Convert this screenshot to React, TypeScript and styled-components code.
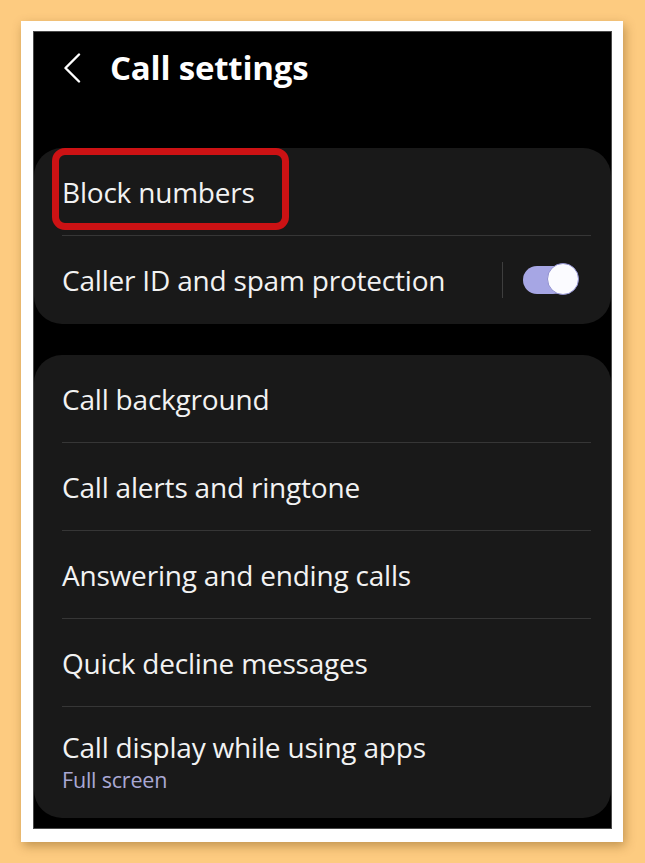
import styled, { createGlobalStyle } from "styled-components";

const GlobalStyle = createGlobalStyle`
  html, body {
    margin: 0;
    padding: 0;
    background: #fdcb80;
  }
  body {
    width: 645px;
    height: 863px;
    overflow: hidden;
    font-family: "Open Sans", "Noto Sans", sans-serif;
  }
`;

const Page = styled.div`
  width: 645px;
  height: 863px;
  padding: 21px 22px 21px 21px;
  box-sizing: border-box;
`;

const Frame = styled.div`
  width: 602px;
  height: 821px;
  background: #ffffff;
  box-sizing: border-box;
  padding: 10px 11px 13px 12px;
  box-shadow: 2px 4px 10px rgba(120, 80, 20, 0.45);
`;

const Screen = styled.div`
  height: 100%;
  background: #000000;
  border: 1px solid #4a4a4a;
  box-sizing: border-box;
  display: flex;
  flex-direction: column;
  overflow: hidden;
`;

const Header = styled.div`
  height: 116px;
  display: flex;
  align-items: flex-start;
  padding: 17px 0 0 26px;
  box-sizing: border-box;
  gap: 26px;
`;

const BackButton = styled.div`
  width: 24px;
  height: 38px;
  display: flex;
  align-items: center;
  justify-content: center;
`;

const Title = styled.h1`
  margin: 0;
  color: #ffffff;
  font-size: 33px;
  font-weight: 700;
  line-height: 38px;
  letter-spacing: -0.2px;
`;

const Card = styled.div<{ $gap?: number }>`
  background: #191919;
  border-radius: 28px;
  margin-top: ${(p) => p.$gap ?? 0}px;
  padding: 0 20px 0 28px;
`;

const Row = styled.div<{ $last?: boolean; $tall?: boolean }>`
  height: ${(p) => (p.$tall ? 111 : 88)}px;
  display: flex;
  align-items: center;
  border-bottom: ${(p) => (p.$last ? "none" : "1.5px solid #363636")};
  box-sizing: border-box;
  position: relative;
`;

const RowText = styled.div`
  flex: 1;
  display: flex;
  flex-direction: column;
`;

const Label = styled.span`
  color: #f2f2f2;
  font-size: 28px;
  line-height: 34px;
  letter-spacing: -0.2px;
`;

const Sub = styled.span`
  color: #a9a8d4;
  font-size: 21.5px;
  line-height: 31px;
  letter-spacing: -0.2px;
`;

const Highlight = styled.div`
  position: absolute;
  left: -10px;
  top: 0;
  width: 237px;
  height: 82px;
  border: 7px solid #cc1214;
  border-radius: 13px;
  box-sizing: border-box;
`;

const Divider = styled.div`
  width: 1px;
  height: 36px;
  background: #3e3e3e;
  margin-right: 20px;
`;

const Toggle = styled.div`
  width: 56px;
  height: 32px;
  position: relative;
  margin-right: 12px;
`;

const Track = styled.div`
  position: absolute;
  left: 0;
  top: 2px;
  width: 44px;
  height: 28px;
  border-radius: 14px;
  background: #a6a6e4;
`;

const Knob = styled.div`
  position: absolute;
  right: 0;
  top: -1px;
  width: 32px;
  height: 32px;
  border-radius: 50%;
  background: #fbfbff;
  border: 1.5px solid #8f8fcf;
  box-sizing: border-box;
`;

const Chevron = () => (
  <svg width="18" height="30" viewBox="0 0 18 30">
    <path d="M16 1.5 L2.5 15 L16 28.5" fill="none" stroke="#ffffff" strokeWidth="2.4" strokeLinecap="round" strokeLinejoin="round" />
  </svg>
);

const items = [
  "Call background",
  "Call alerts and ringtone",
  "Answering and ending calls",
  "Quick decline messages",
];

export default function App() {
  return (
    <>
      <GlobalStyle />
      <Page>
        <Frame>
          <Screen>
            <Header>
              <BackButton>
                <Chevron />
              </BackButton>
              <Title>Call settings</Title>
            </Header>
            <Card>
              <Row>
                <Highlight />
                <RowText>
                  <Label>Block numbers</Label>
                </RowText>
              </Row>
              <Row $last>
                <RowText>
                  <Label>Caller ID and spam protection</Label>
                </RowText>
                <Divider />
                <Toggle>
                  <Track />
                  <Knob />
                </Toggle>
              </Row>
            </Card>
            <Card $gap={31}>
              {items.map((t) => (
                <Row key={t}>
                  <RowText>
                    <Label>{t}</Label>
                  </RowText>
                </Row>
              ))}
              <Row $last $tall>
                <RowText>
                  <Label>Call display while using apps</Label>
                  <Sub>Full screen</Sub>
                </RowText>
              </Row>
            </Card>
          </Screen>
        </Frame>
      </Page>
    </>
  );
}
